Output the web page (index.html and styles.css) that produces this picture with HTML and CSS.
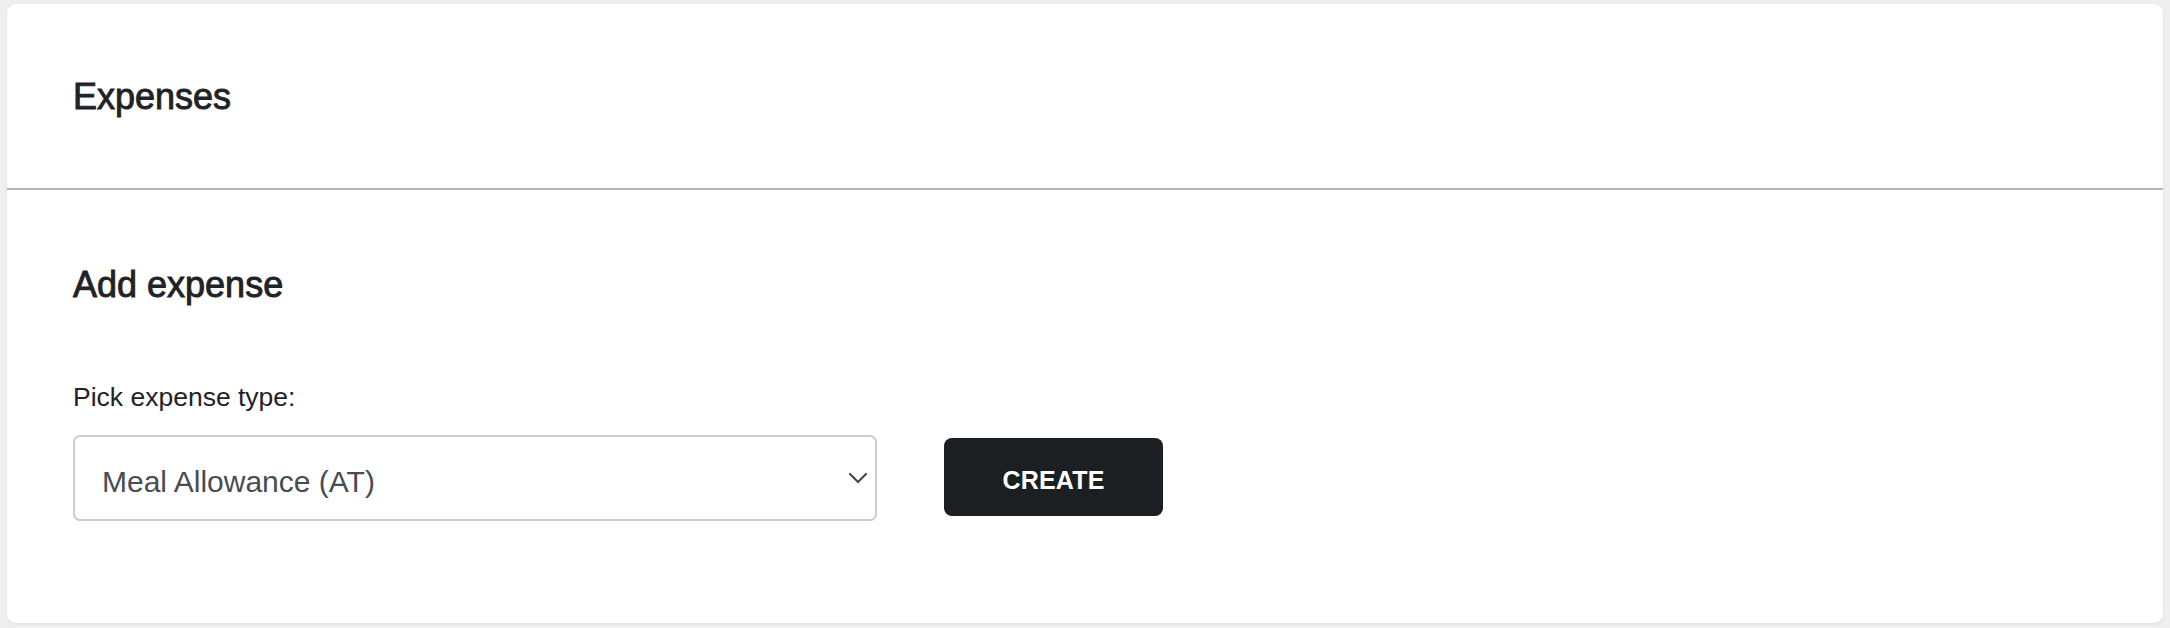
FILE: index.html
```html
<!DOCTYPE html>
<html lang="en">
<head>
<meta charset="utf-8">
<title>Expenses</title>
<link rel="stylesheet" href="styles.css">
</head>
<body>
<div class="page">
  <section class="card">
    <header class="card-header">
      <h1 class="title">Expenses</h1>
    </header>
    <div class="card-body">
      <h2 class="subtitle">Add expense</h2>
      <div class="form-row">
        <div class="field">
          <label class="label" for="type">Pick expense type:</label>
          <div class="select" id="type" role="combobox" tabindex="0">
            <span class="select-value">Meal Allowance (AT)</span>
            <svg class="chevron" width="18" height="10" viewBox="0 0 18 10" aria-hidden="true">
              <path d="M1 1 L9 9 L17 1" fill="none" stroke="#3f4448" stroke-width="2" stroke-linecap="round" stroke-linejoin="round"/>
            </svg>
          </div>
        </div>
        <button class="btn" type="button">CREATE</button>
      </div>
    </div>
  </section>
</div>
</body>
</html>
```

FILE: styles.css
```css
* { box-sizing: border-box; }

html, body {
  margin: 0;
  height: 100%;
}

body {
  background: #efefef;
  font-family: "Liberation Sans", Arial, Helvetica, sans-serif;
  color: #1f2326;
}

.page {
  height: 100%;
  padding: 4px 7px 5px 7px;
}

.card {
  height: 100%;
  background: #ffffff;
  border-radius: 9px;
  box-shadow: 0 1px 3px rgba(0, 0, 0, 0.08);
  display: flex;
  flex-direction: column;
}

.card-header {
  height: 186px;
  border-bottom: 2px solid #b5b5b5;
  display: flex;
  align-items: center;
  padding: 0 66px;
}

.title,
.subtitle {
  margin: 0;
  font-size: 36px;
  line-height: 36px;
  font-weight: 400;
  -webkit-text-stroke: 0.9px #1f2326;
  color: #1f2326;
}

.title {
  padding-top: 2px;
}

.card-body {
  padding: 77px 66px 0 66px;
}

.subtitle {
  margin-bottom: 81px;
}

.form-row {
  display: flex;
  align-items: flex-end;
  gap: 67px;
}

.field {
  display: flex;
  flex-direction: column;
  gap: 25px;
}

.label {
  font-size: 26.5px;
  line-height: 26px;
  color: #1f2326;
}

.select {
  width: 804px;
  height: 86px;
  border: 2px solid #c9cdd2;
  border-radius: 7px;
  display: flex;
  align-items: center;
  justify-content: space-between;
  padding: 7px 8px 0 27px;
}

.select-value {
  font-size: 30px;
  color: #474d52;
}

.chevron {
  margin-top: -8px;
}

.btn {
  width: 219px;
  height: 78px;
  margin-bottom: 5px;
  border: 0;
  border-radius: 8px;
  background: #1b1f22;
  color: #ffffff;
  font-family: "Liberation Sans", Arial, Helvetica, sans-serif;
  font-weight: 700;
  font-size: 25px;
  letter-spacing: 0.2px;
  padding: 6px 0 0 0;
}
```
